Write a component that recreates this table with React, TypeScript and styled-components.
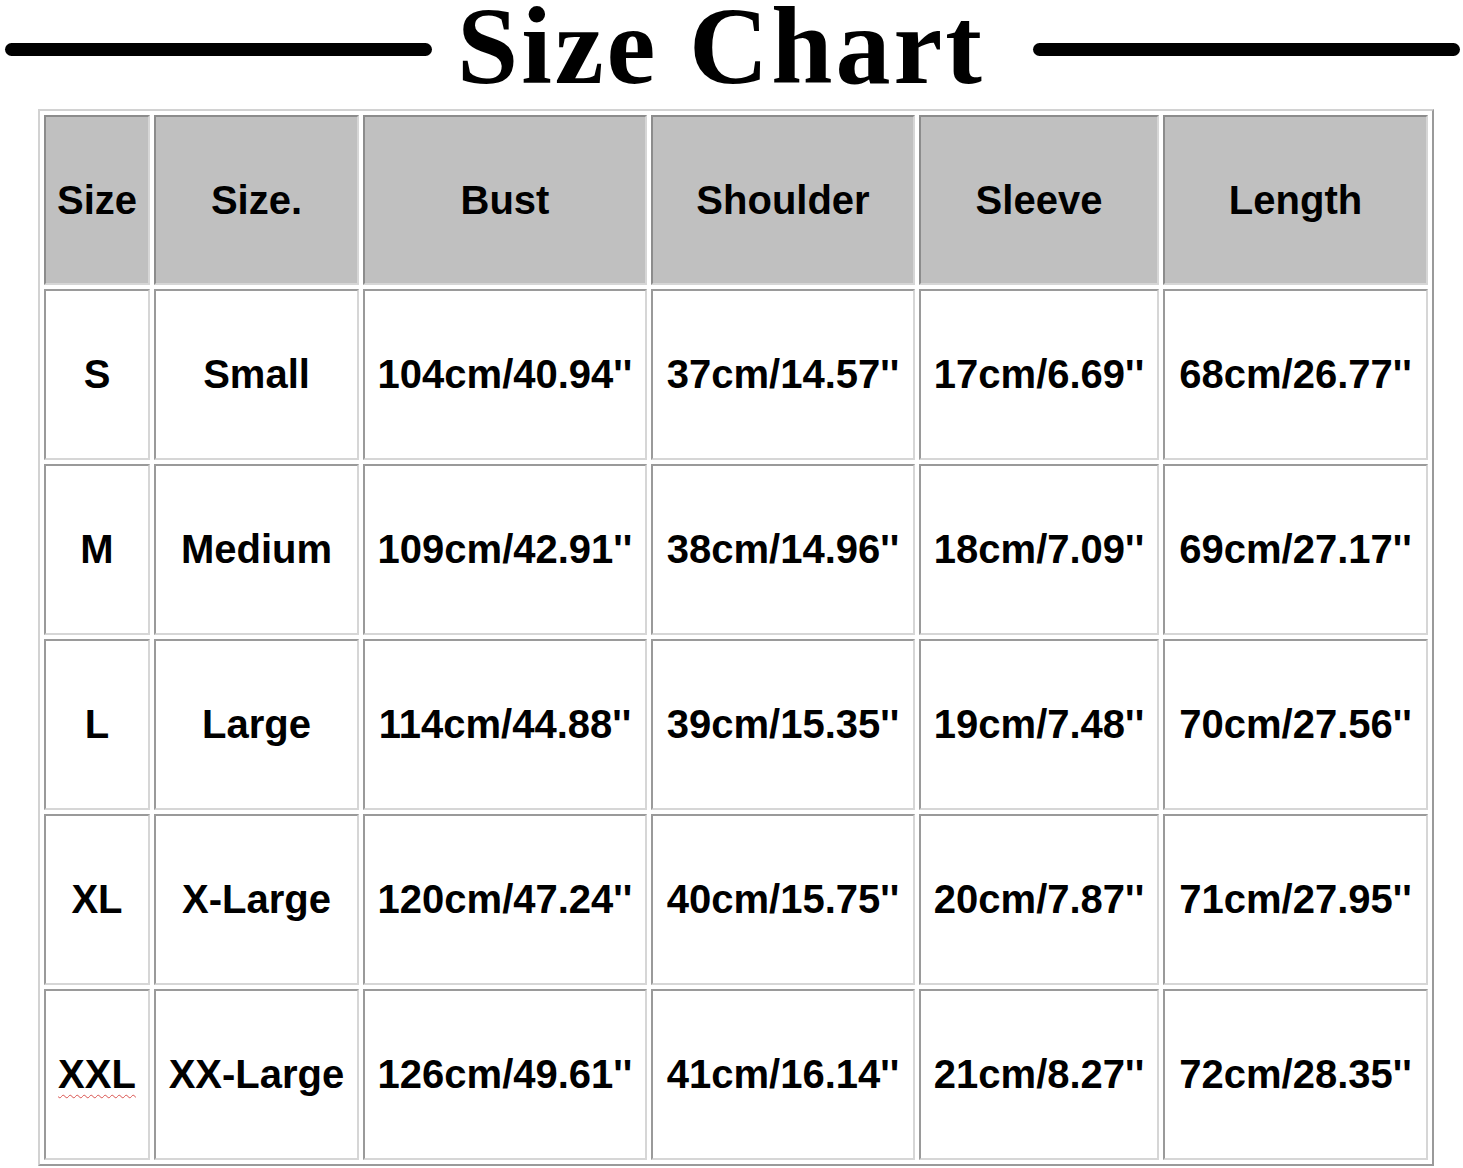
import React from "react";
import styled, { createGlobalStyle } from "styled-components";

const Global = createGlobalStyle`
  html, body { margin: 0; padding: 0; background: #ffffff; }
  body { width: 1463px; height: 1168px; overflow: hidden; }
`;

const Page = styled.div`
  width: 1463px;
  height: 1168px;
  background: #fff;
  display: flex;
  flex-direction: column;
`;

const Header = styled.header`
  height: 109px;
  display: flex;
  align-items: center;
  padding: 0 3px 0 5px;
  box-sizing: border-box;
`;

const Rule = styled.div`
  flex: 1;
  height: 13px;
  margin-bottom: 10px;
  background: #000;
  border-radius: 7px;
`;

const Title = styled.h1`
  margin: 0 48px 17px 25px;
  font-family: "Liberation Serif", "Times New Roman", serif;
  font-weight: 700;
  font-size: 110px;
  letter-spacing: 3px;
  line-height: 80px;
  color: #000;
  white-space: nowrap;
`;

const Table = styled.table`
  margin-left: 38px;
  width: 1396px;
  table-layout: fixed;
  border-collapse: separate;
  border-spacing: 4px;
  border: 2px solid;
  border-color: #d2d2d2 #9a9a9a #9a9a9a #d2d2d2;
  box-sizing: border-box;
`;

const HeadCell = styled.th<{ $w: number }>`
  box-sizing: border-box;
  width: ${(p) => p.$w}px;
  height: 170px;
  padding: 0;
  background: #c0c0c0;
  border: 2px solid;
  border-color: #8c8c8c #d6d6d6 #d6d6d6 #8c8c8c;
  font-family: "Liberation Sans", Arial, sans-serif;
  font-weight: 700;
  font-size: 40px;
  color: #000;
  text-align: center;
  vertical-align: middle;
  white-space: nowrap;
`;

const Cell = styled.td`
  box-sizing: border-box;
  height: 171px;
  padding: 0;
  background: #fff;
  border: 2px solid;
  border-color: #9a9a9a #d6d6d6 #d6d6d6 #9a9a9a;
  font-family: "Liberation Sans", Arial, sans-serif;
  font-weight: 700;
  font-size: 40px;
  color: #000;
  text-align: center;
  vertical-align: middle;
  white-space: nowrap;
`;

const Misspelled = styled.span`
  text-decoration: underline wavy #d9534f;
  text-decoration-thickness: 1px;
  text-underline-offset: 6px;
`;

const columns: [string, number][] = [
  ["Size", 106],
  ["Size.", 205],
  ["Bust", 284],
  ["Shoulder", 264],
  ["Sleeve", 240],
  ["Length", 265],
];

const rows: string[][] = [
  ["S", "Small", "104cm/40.94''", "37cm/14.57''", "17cm/6.69''", "68cm/26.77''"],
  ["M", "Medium", "109cm/42.91''", "38cm/14.96''", "18cm/7.09''", "69cm/27.17''"],
  ["L", "Large", "114cm/44.88''", "39cm/15.35''", "19cm/7.48''", "70cm/27.56''"],
  ["XL", "X-Large", "120cm/47.24''", "40cm/15.75''", "20cm/7.87''", "71cm/27.95''"],
  ["XXL", "XX-Large", "126cm/49.61''", "41cm/16.14''", "21cm/8.27''", "72cm/28.35''"],
];

export default function App() {
  return (
    <Page>
      <Global />
      <Header>
        <Rule />
        <Title>Size Chart</Title>
        <Rule />
      </Header>
      <Table>
        <thead>
          <tr>
            {columns.map(([label, w]) => (
              <HeadCell key={label} $w={w}>
                {label}
              </HeadCell>
            ))}
          </tr>
        </thead>
        <tbody>
          {rows.map((r) => (
            <tr key={r[0]}>
              {r.map((v, i) => (
                <Cell key={i}>
                  {v === "XXL" ? <Misspelled>{v}</Misspelled> : v}
                </Cell>
              ))}
            </tr>
          ))}
        </tbody>
      </Table>
    </Page>
  );
}
